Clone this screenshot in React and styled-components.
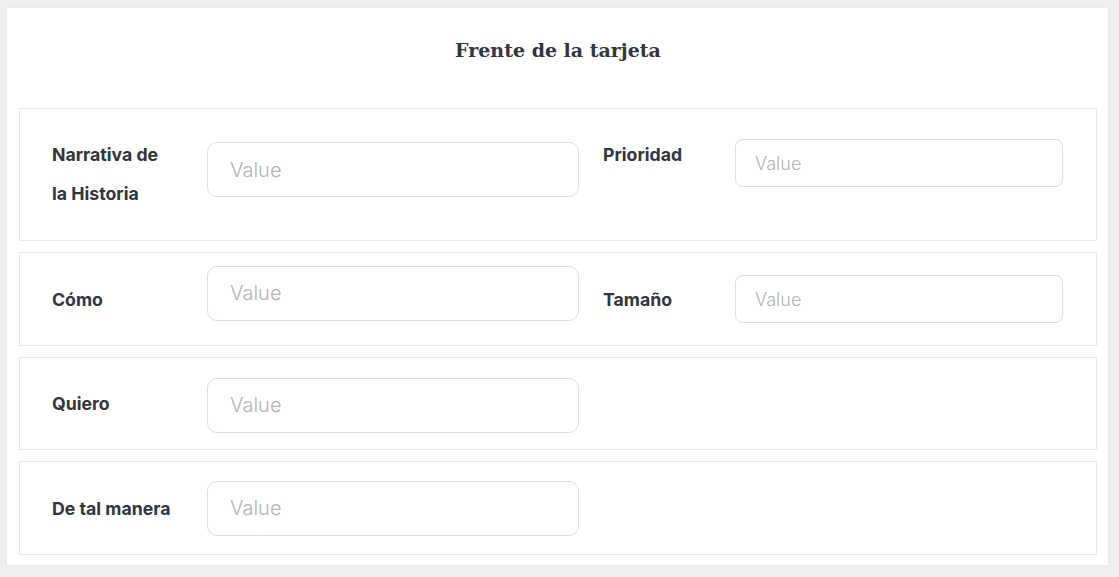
import React from "react";
import styled, { createGlobalStyle } from "styled-components";

const Global = createGlobalStyle`
  html, body { margin: 0; padding: 0; background: #eceef0; }
  body { font-family: Inter, "Liberation Sans", sans-serif; }
  * { box-sizing: border-box; }
`;

const Page = styled.div`
  padding: 8px 11px 12px 7px;
`;

const Card = styled.div`
  background: #ffffff;
  box-shadow: 0 0 2px rgba(0, 0, 0, 0.06);
  padding: 0 11px 10px 12px;
  display: flex;
  flex-direction: column;
  gap: 11px;
`;

const Header = styled.div`
  height: 89px;
  display: flex;
  flex-direction: column;
  align-items: center;
  padding-top: 28px;
`;

const Title = styled.h2`
  margin: 0;
  font-family: "DejaVu Serif", "Liberation Serif", serif;
  font-weight: 700;
  font-size: 19px;
  line-height: 28px;
  color: #2e3741;
  letter-spacing: 0;
`;

const Section = styled.div`
  border: 1px solid #e6e8ea;
  height: ${(p) => p.$h}px;
  display: grid;
  grid-template-columns: 571px 1fr;
  align-items: ${(p) => (p.$top ? "start" : "center")};
  padding-top: ${(p) => (p.$top ? 26 : 0)}px;
`;

const Field = styled.div`
  display: flex;
  align-items: ${(p) => (p.$top ? "flex-start" : "center")};
  padding-left: ${(p) => p.$pl}px;
`;

const Label = styled.label`
  width: ${(p) => p.$w}px;
  flex: none;
  font-family: Inter, "Liberation Sans", sans-serif;
  font-weight: 700;
  font-size: 17.7px;
  line-height: 39px;
  color: #2f3640;
  padding-right: ${(p) => p.$pr}px;
`;

const Input = styled.input`
  width: ${(p) => p.$w}px;
  height: ${(p) => p.$h}px;
  flex: none;
  border: 1px solid #dcdfe2;
  border-radius: ${(p) => p.$r}px;
  background: #fff;
  padding: 0 0 0 ${(p) => p.$pad}px;
  font-family: Inter, "Liberation Sans", sans-serif;
  font-size: ${(p) => p.$fs}px;
  font-weight: 300;
  color: #333;
  margin-top: ${(p) => p.$mt || 0}px;
  margin-bottom: ${(p) => p.$mb || 0}px;
  outline: none;
  &::placeholder { color: #b1b3b6; }
`;

const BigInput = (props) => (
  <Input placeholder="Value" $w={372} $h={55} $r={10} $pad={22} $fs={20} {...props} />
);
const SmallInput = (props) => (
  <Input placeholder="Value" $w={328} $h={48} $r={8} $pad={19} $fs={18} {...props} />
);

export default function App() {
  return (
    <>
      <Global />
      <Page>
        <Card>
          <Header>
            <Title>Frente de la tarjeta</Title>
          </Header>

          <Section $h={133} $top>
            <Field $pl={32} $top>
              <Label $w={155} $pr={38}>Narrativa de la Historia</Label>
              <BigInput $mt={7} />
            </Field>
            <Field $pl={12} $top>
              <Label $w={132} $pr={10}>Prioridad</Label>
              <SmallInput $mt={4} />
            </Field>
          </Section>

          <Section $h={94}>
            <Field $pl={32}>
              <Label $w={155} $pr={10}>Cómo</Label>
              <BigInput $mb={12} />
            </Field>
            <Field $pl={12}>
              <Label $w={132} $pr={10}>Tamaño</Label>
              <SmallInput />
            </Field>
          </Section>

          <Section $h={93}>
            <Field $pl={32}>
              <Label $w={155} $pr={10}>Quiero</Label>
              <BigInput $mt={3} />
            </Field>
          </Section>

          <Section $h={94}>
            <Field $pl={32}>
              <Label $w={155} $pr={10}>De tal manera</Label>
              <BigInput />
            </Field>
          </Section>
        </Card>
      </Page>
    </>
  );
}
